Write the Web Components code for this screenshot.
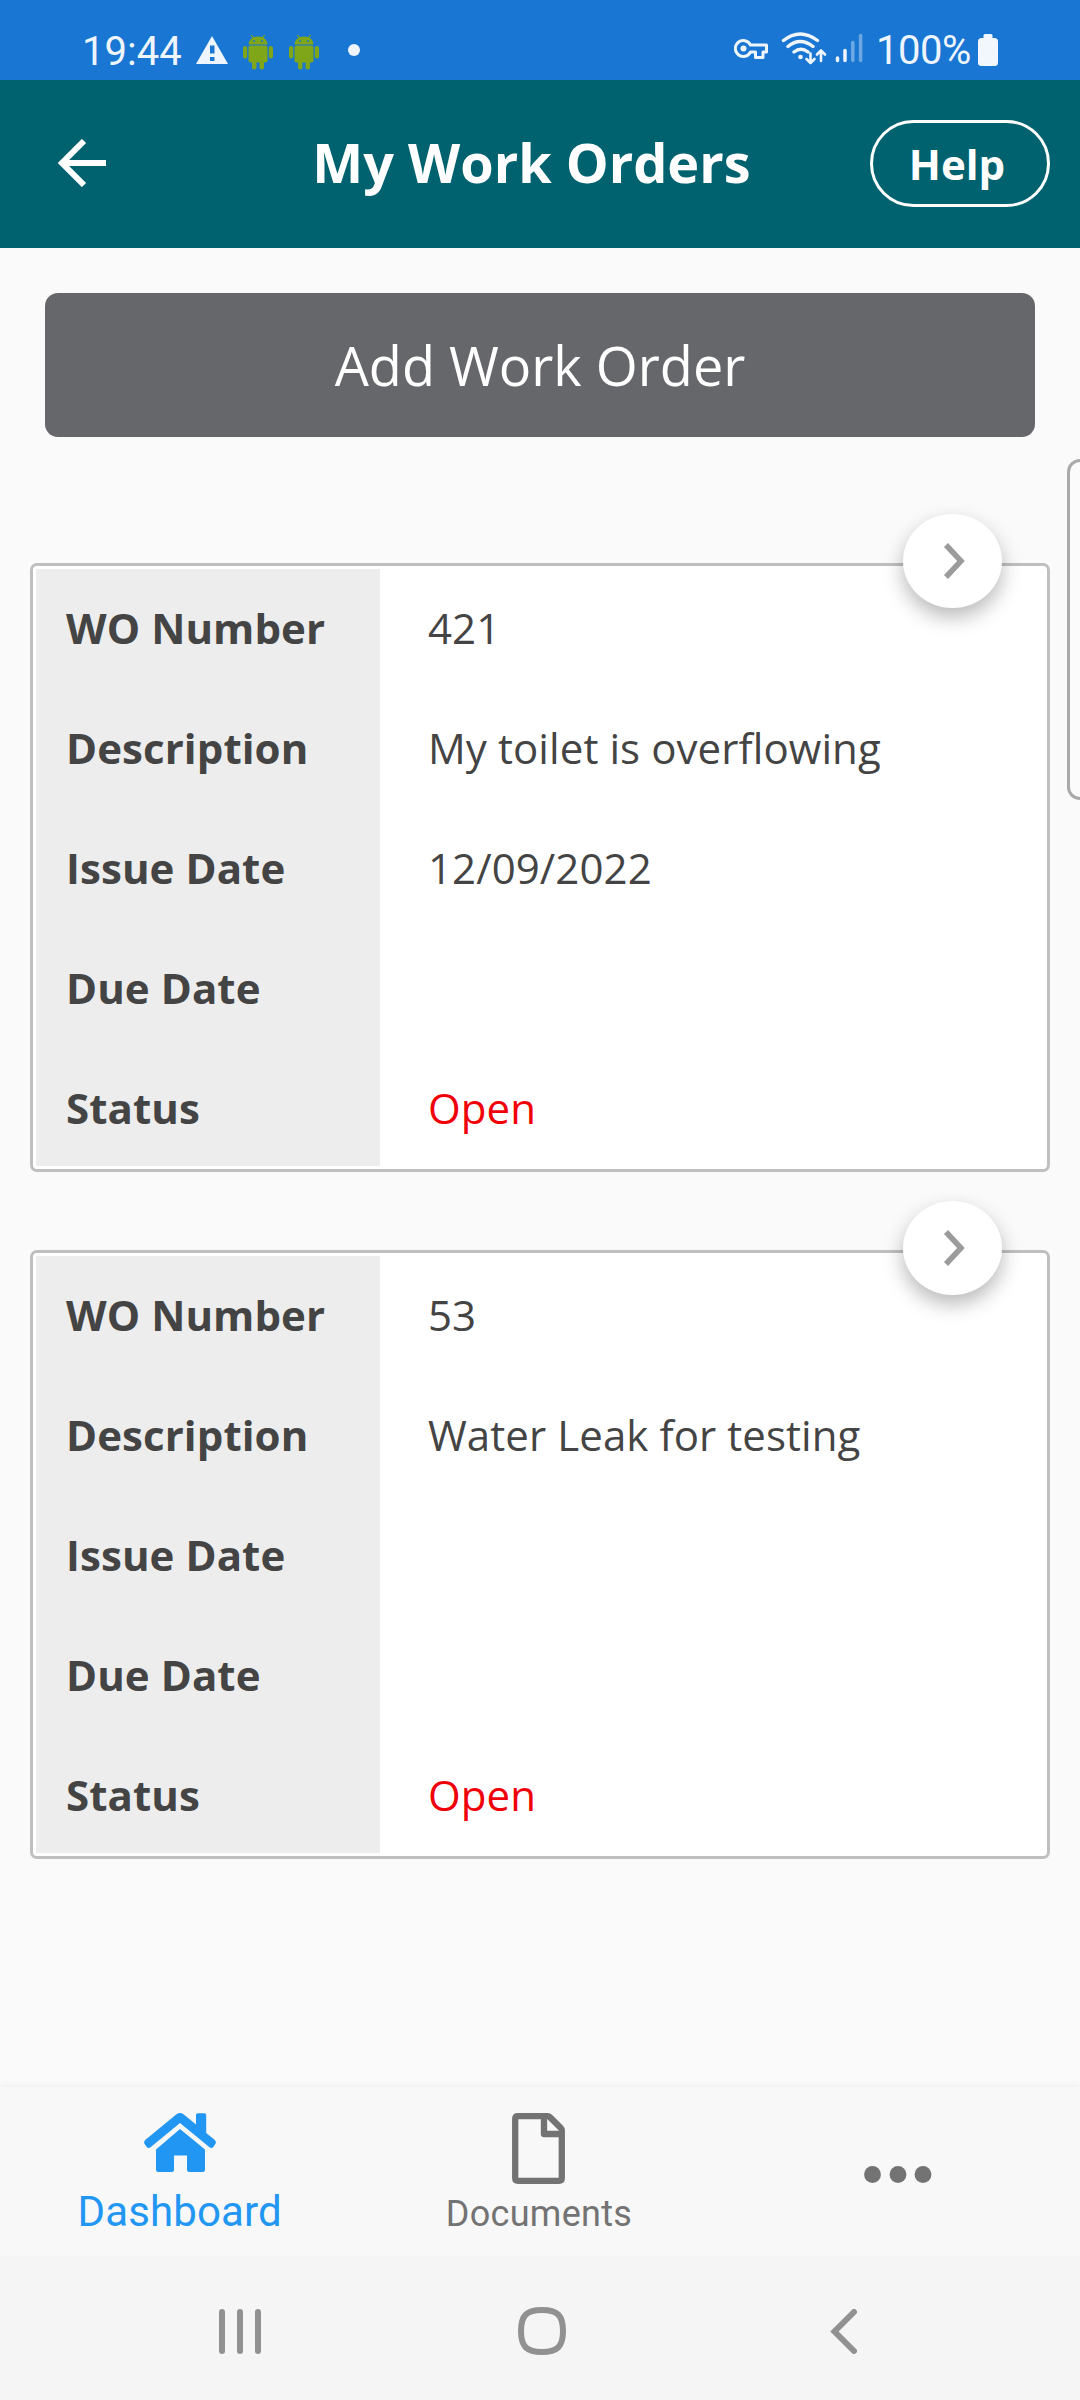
<!DOCTYPE html>
<html lang="en">
<head>
<meta charset="utf-8">
<title>My Work Orders</title>
<style>
  body {
    margin: 0;
    width: 1080px;
    height: 2400px;
    overflow: hidden;
    background: #fafafa;
    font-family: "Open Sans", sans-serif;
    color: #444;
  }
</style>
</head>
<body>
<app-screen>
  <status-bar slot="top" time="19:44" battery="100%"></status-bar>
  <title-bar slot="top" action="Help">My Work Orders</title-bar>

  <main-button>Add Work Order</main-button>
  <work-order number="421" description="My toilet is overflowing" issued="12/09/2022" due="" status="Open"></work-order>
  <work-order number="53" description="Water Leak for testing" issued="" due="" status="Open"></work-order>
  <side-handle></side-handle>

  <tab-bar slot="bottom">
    <tab-item icon="home" active>Dashboard</tab-item>
    <tab-item icon="file">Documents</tab-item>
    <tab-item icon="more"></tab-item>
  </tab-bar>
  <system-nav slot="bottom"></system-nav>
</app-screen>

<script>
// Base class: clones the markup and styles of the component into its shadow root
class BaseElement extends HTMLElement {
  constructor() {
    super();
    this.attachShadow({ mode: "open" });
  }

  attr(name) {
    return this.getAttribute(name) || "";
  }

  connectedCallback() {
    const template = document.createElement("template");
    template.innerHTML = `<style>${this.getStyles()}</style>${this.getTemplate()}`;
    this.shadowRoot.appendChild(template.content.cloneNode(true));
  }
}

class AppScreen extends BaseElement {
  getTemplate() {
    return `
      <header><slot name="top"></slot></header>
      <main><slot></slot></main>
      <footer><slot name="bottom"></slot></footer>`;
  }

  getStyles() {
    return `
      :host { display: flex; flex-direction: column; height: 2400px; }
      main { flex: 1; display: flex; flex-direction: column; padding: 45px 30px 0; position: relative; }`;
  }
}

class StatusBar extends BaseElement {
  getTemplate() {
    const android = `
      <svg class="android" width="32" height="36" viewBox="0 0 32 36" fill="#7fa619">
        <path d="M6.5 10.5C6.800 6 10 2.500 16 2.500S25.200 6 25.500 10.500z"/>
        <path d="M9.500 1l2.200 3.500M22.500 1l-2.200 3.500" stroke="#7fa619" stroke-width="1.200"/>
        <rect x="6.500" y="11.500" width="19" height="17" rx="2"/>
        <rect x="1" y="12" width="4.200" height="12.500" rx="2.100"/>
        <rect x="26.800" y="12" width="4.200" height="12.500" rx="2.100"/>
        <rect x="10" y="25" width="4.500" height="10.500" rx="2.200"/>
        <rect x="17.500" y="25" width="4.500" height="10.500" rx="2.200"/>
        <circle cx="12" cy="7" r="1" fill="#1976d2"/><circle cx="20" cy="7" r="1" fill="#1976d2"/>
      </svg>`;
    return `
      <span class="time">${this.attr("time")}</span>
      <svg class="warn" width="32" height="28" viewBox="0 0 32 28">
        <path d="M16 0L32 28H0z" fill="#eef5fd"/>
        <path d="M14 9.500h4.500v8H14zM14 21h4.500v4H14z" fill="#1976d2"/>
      </svg>
      ${android}${android}
      <i class="dot"></i>
      <svg class="right" width="138" height="36" viewBox="0 0 138 36" fill="none" stroke="#eef5fd">
        <path d="M16.500 13.500A8 8 0 1 0 16.500 20.500H21.500V26H29V20.500H32.500V13.500z" stroke-width="3" stroke-linejoin="round" transform="translate(0 -.5)"/>
        <circle cx="9.500" cy="16.500" r="3" fill="#eef5fd" stroke="none"/>
        <g stroke-width="3.400" stroke-linecap="round">
          <path d="M49.500 8.500Q66 -4.500 83.500 8.500M54 14.500Q66 4.500 79 14.500M60 20Q67 14.500 74 20"/>
        </g>
        <circle cx="66.500" cy="25" r="2.300" fill="#eef5fd" stroke="none"/>
        <path d="M76.500 21.500V31M72.500 27l4 4 4-4M87 29V19M83 22.500l4-4 4 4" stroke-width="2.600" stroke-linecap="round" stroke-linejoin="round"/>
        <g stroke-width="3.500" stroke-linecap="round">
          <path d="M103.500 26V28.500M111 18.500V28.500"/>
          <path d="M118.800 10.500V28.500M126.600 3.500V28.500" opacity=".4"/>
        </g>
      </svg>
      <span class="battery">${this.attr("battery")}</span>
      <svg width="20" height="32" viewBox="0 0 20 32" fill="#f2f6fd">
        <rect x="5.500" width="9" height="7" rx="1.500"/><rect y="4" width="20" height="28" rx="3.500"/>
      </svg>`;
  }

  getStyles() {
    return `
      :host {
        display: flex; align-items: center; box-sizing: border-box;
        height: 80px; padding: 20px 82px 0 82px; background: #1976d2;
        font: 40px/40px Roboto, sans-serif; color: #eef5fd;
      }
      .time { width: 114px; margin-top: 4px; }
      .warn { margin-right: 14px; }
      .android { margin: 3px 14px 0 0; }
      .dot { width: 12px; height: 12px; border-radius: 50%; background: #eef5fd; margin-left: 14px; }
      .right { margin: 0 4px 0 auto; }
      .battery { width: 99px; margin: 1px 3px 0 0; white-space: nowrap; letter-spacing: -.5px; }`;
  }
}

class TitleBar extends BaseElement {
  getTemplate() {
    return `
      <svg width="48" height="48" viewBox="0 0 48 48" fill="none" stroke="#fff" stroke-width="6">
        <path d="M48 24H5M26 2L4 24L26 46"/>
      </svg>
      <h1><slot></slot></h1>
      <button>${this.attr("action")}</button>`;
  }

  getStyles() {
    return `
      :host {
        display: grid; grid-template-columns: 180px 1fr 180px; align-items: center;
        height: 168px; padding: 0 30px; background: #00616f; color: #fff;
      }
      svg { margin: -2px 0 0 28px; }
      h1 { margin: -4px 0 0; padding-right: 17px; text-align: center; font-size: 54px; line-height: 74px; white-space: nowrap; }
      button {
        height: 87px; box-sizing: border-box; margin: 0 0 2px; padding: 0 6px 0 0;
        border: 3px solid #fff; border-radius: 44px; background: none;
        color: inherit; font: bold 42px "Open Sans", sans-serif;
      }`;
  }
}

class MainButton extends BaseElement {
  getTemplate() {
    return `<button><slot></slot></button>`;
  }

  getStyles() {
    return `
      :host { display: block; margin: 0 15px 126px; }
      button {
        display: block; width: 100%; height: 144px; border: 0; border-radius: 13px;
        background: #66676b; color: #fff; font: 54px "Open Sans", sans-serif;
      }`;
  }
}

class WorkOrder extends BaseElement {
  getTemplate() {
    return `
      <div class="labels">
        <b>WO Number</b><b>Description</b><b>Issue Date</b><b>Due Date</b><b>Status</b>
      </div>
      <div class="values">
        <span>${this.attr("number")}</span>
        <span>${this.attr("description")}</span>
        <span>${this.attr("issued")}</span>
        <span>${this.attr("due")}</span>
        <span class="status">${this.attr("status")}</span>
      </div>
      <div class="open">
        <svg width="24" height="40" viewBox="0 0 24 40" fill="none" stroke="#9b9b9b" stroke-width="5.500">
          <path d="M4 4L19 20L4 36"/>
        </svg>
      </div>`;
  }

  getStyles() {
    return `
      :host {
        display: flex; position: relative; box-sizing: border-box; height: 609px; padding: 3px;
        border: 3px solid #bfbfbf; border-radius: 7px; background: #fff; margin-bottom: 78px;
        font-size: 42px; letter-spacing: .08px;
      }
      .labels, .values { display: flex; flex-direction: column; justify-content: center; }
      .labels { width: 344px; background: #ededed; }
      .values { padding-left: 48px; }
      b, span { flex: 0 0 120px; line-height: 120px; white-space: nowrap; }
      b { padding-left: 30px; }
      .status { color: #f00008; }
      .open {
        position: absolute; top: -52px; right: 45px; width: 99px; height: 94px;
        display: flex; align-items: center; justify-content: center;
        border-radius: 50%; background: #fff; box-shadow: 0 9px 20px rgba(0, 0, 0, .28);
      }
      svg { margin-left: 3px; filter: blur(.7px); }`;
  }
}

// Edge panel handle of the phone, half of it is off the screen
class SideHandle extends BaseElement {
  getTemplate() {
    return ``;
  }

  getStyles() {
    return `
      :host {
        position: absolute; top: 211px; right: 0; width: 13px; height: 341px; box-sizing: border-box;
        border: 3px solid #aaa; border-right: 0; border-radius: 14px 0 0 14px; background: #fbfbfb;
      }`;
  }
}

class TabBar extends BaseElement {
  getTemplate() {
    return `<slot></slot>`;
  }

  getStyles() {
    return `
      :host {
        display: grid; grid-template-columns: repeat(3, 1fr); height: 169px; padding-right: 2px;
        background: #f8f8f8; box-shadow: 0 -3px 3px rgba(0, 0, 0, .03);
      }`;
  }
}

class TabItem extends BaseElement {
  getTemplate() {
    const icons = {
      home: `
        <svg width="72" height="60" viewBox="0 0 72 60" fill="currentColor">
          <path d="M36 16L61 36.500V56.500Q61 59 58.500 59H45.500Q43 59 43 56.500V42.500H30V56.500Q30 59 27.500 59H14.500Q12 59 12 56.500V36.500z"/>
          <path d="M32.500 1.300Q36 -1.200 39.500 1.300L52 11.500V2Q52 .3 53.700 .3H60.500Q62.200 .3 62.200 2V20L70.500 26.800Q73 29.200 71 31.500L69.500 33.800Q67.800 36 65.500 34.300L36 10L6.500 34.300Q4.200 36 2.500 33.800L1 31.500Q-1 29.200 1.500 26.800z"/>
        </svg>`,
      file: `
        <svg width="53" height="71" viewBox="0 0 53 71" fill="none" stroke="currentColor" stroke-width="6.300" stroke-linejoin="round">
          <path d="M6 3.200H35.500Q37 3.200 38 4.200L48.800 15Q49.800 16 49.800 17.500V65Q49.800 67.800 47 67.800H6Q3.200 67.800 3.200 65V6Q3.200 3.200 6 3.200z"/>
          <path d="M32 3V21H50"/>
        </svg>`,
      more: `
        <svg width="68" height="17" viewBox="0 0 68 17" fill="currentColor">
          <circle cx="8.500" cy="8.500" r="8.400"/><circle cx="34" cy="8.500" r="8.400"/><circle cx="59" cy="8.500" r="8.400"/>
        </svg>`
    };
    return `${icons[this.attr("icon")]}<span><slot></slot></span>`;
  }

  getStyles() {
    return `
      :host {
        display: flex; flex-direction: column; align-items: center; justify-content: space-between;
        box-sizing: border-box; padding: 26px 0 21px; color: #737373;
        font: 36px/42px Roboto, sans-serif; letter-spacing: .3px;
      }
      :host([active]) { color: #2196f3; font-size: 42px; line-height: 46px; letter-spacing: .15px; }
      :host([icon="more"]) { padding-top: 79px; }`;
  }
}

class SystemNav extends BaseElement {
  getTemplate() {
    return `
      <svg width="42" height="45" viewBox="0 0 42 45" stroke-linecap="round">
        <path d="M3 3V42M21 3V42M39 3V42"/>
      </svg>
      <svg width="48" height="48" viewBox="0 0 48 48">
        <path d="M24 3C39 3 45 8 45 24S39 45 24 45S3 40 3 24S9 3 24 3z"/>
      </svg>
      <svg width="27" height="45" viewBox="0 0 27 45" stroke-linecap="round">
        <path d="M24 3L4.500 22.500L24 42"/>
      </svg>`;
  }

  getStyles() {
    return `
      :host {
        display: flex; justify-content: space-between; align-items: center; box-sizing: border-box;
        height: 144px; padding: 6px 223px 0 219px; background: #f5f5f5;
      }
      svg { fill: none; stroke: #919191; stroke-width: 6; }
      svg:nth-of-type(2) { margin-left: -8px; }`;
  }
}

customElements.define("app-screen", AppScreen);
customElements.define("status-bar", StatusBar);
customElements.define("title-bar", TitleBar);
customElements.define("main-button", MainButton);
customElements.define("work-order", WorkOrder);
customElements.define("side-handle", SideHandle);
customElements.define("tab-bar", TabBar);
customElements.define("tab-item", TabItem);
customElements.define("system-nav", SystemNav);
</script>
</body>
</html>
